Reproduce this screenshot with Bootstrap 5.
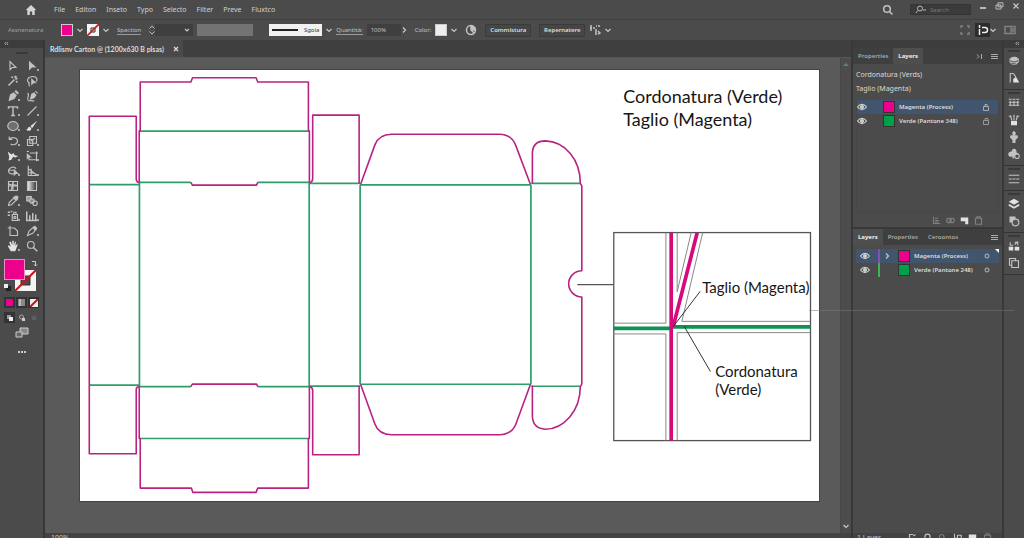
<!DOCTYPE html>
<html lang="it">
<head>
<meta charset="utf-8">
<meta name="viewport" content="width=device-width, initial-scale=1">
<title>Carton</title>
<link href="https://cdn.jsdelivr.net/npm/bootstrap@5.3.0/dist/css/bootstrap.min.css" rel="stylesheet">
<style>
:root{--bar:#4b4b4b;--deep:#3f3f3f;--line:#383838;--txt:#c4c4c4;--ic:#c2c2c2;--mag:#ec008c;--grn:#00a04a}
body{font-family:"Noto Sans","Open Sans",sans-serif;font-size:7px;line-height:10px;color:var(--txt);background:#4b4b4b}
button,input,select{font:inherit;color:inherit;border:0;padding:0;background:none}
a{color:inherit;text-decoration:none}
svg{display:block;flex:none}
.ico{width:12px;height:12px;fill:none;stroke:var(--ic);stroke-width:1.5}
.ico .f,.f{fill:var(--ic);stroke:none}
.ico .hi{fill:#e2e2e2;stroke:none}
.chev{width:6px;height:6px;fill:none;stroke:#c8c8c8;stroke-width:1.2}
.app{height:100vh}
.menubar{height:20px;background:var(--bar);border-bottom:1px solid #414141}
.menubar nav{font-size:7px;gap:10px;margin-left:17px;color:#d0d0d0}
.home{margin-left:25px}
.search{width:61px;height:11px;background:#3b3b3b;border:1px solid #353535;padding:0 4px}
.search input{width:40px;font-size:6px}
.search input::placeholder{color:#777;opacity:1}
.control{height:20px;background:var(--bar);font-size:6px}
.control .first{width:53px;color:#a2a2a2}
.swatch{width:12px;height:12px;border:1px solid #ccc}
.mag{background:var(--mag)}.grn{background:var(--grn)}.pale{background:#eee}
.under{border-bottom:1px solid #999;line-height:8px}
.field{height:12px;background:var(--deep)}
.amount{width:34px}
.pick{appearance:none;width:38px;background:var(--deep) url("data:image/svg+xml,%3Csvg xmlns='http://www.w3.org/2000/svg' viewBox='0 0 6 6'%3E%3Cpath d='M1 2l2 2 2-2' fill='none' stroke='%23c8c8c8' stroke-width='1.2'/%3E%3C/svg%3E") no-repeat right 3px center/6px}
.profile{width:56px;height:12px;background:#737373}
.brush{width:53px;height:12px;background:#f1f1f1;color:#333}
.brush i{width:26px;height:2px;background:#222}
.act{height:13px;border:1px solid #3a3a3a;background:#464646;color:#dedede;font-weight:600;width:46px;border-radius:1px}
.snap{width:15px;height:14px;background:#2c2c2c;place-items:center}
.tools{width:45px;background:var(--bar);border-right:2px solid var(--line)}
.strip{height:8px;background:#3c3c3c}
.grip{width:12px;height:2px;background:#393939}
.toolgrid{display:grid;grid-template-columns:19px 19px;grid-auto-rows:15px;padding:0 3px}
.toolgrid button{display:grid;place-items:center;position:relative}
.more::after{content:"";position:absolute;right:2px;bottom:2px;border:1px solid #aaa}
.pair{width:34px;height:34px;position:relative;margin:6px 0 0 4px}
.pair>*{position:absolute}
.pair .fillc{left:0;top:0;width:21px;height:21px;border:1px solid #ee8cc8}
.pair .nofill{left:11px;top:11px}
.pair .swap{left:27px;top:1px}
.pair .reset{left:0;top:25px}
.mini{gap:1px;padding-left:4px}
.mini button{width:11px;height:11px;background:#333;display:grid;place-items:center}
.mini .plain{background:none}
.mini i{width:7px;height:7px}
.doc-tabs{height:18px;background:var(--deep);border-bottom:1px solid #555}
.doc-tab{background:#4a4a4a;width:138px;font-family:Lato,sans-serif;font-weight:700;color:#dcdcdc;padding:0 4px 0 5px}
.canvas{background:#5a5a5a;padding:12px 21px 0 35px}
.artboard{background:#fff;outline:1px solid #444}
.artboard svg{width:100%;height:auto}
.note{font-family:Lato,"Noto Sans",sans-serif;fill:#161616}
.vscroll{width:11px;background:#4c4c4c;border-left:1px solid #474747}
.status{height:5px;background:#434343;padding-left:6px}
.panels{width:153px;background:var(--line);border-left:2px solid var(--line);border-right:2px solid var(--line)}
.ptabs{height:16px;background:#3f3f3f}
.ptabs button{padding:0 5px;color:#a8a8a8;font-weight:600;font-size:6px}
.ptabs .on{background:#4e4e4e;color:#eee;font-weight:700}
.pbody{background:#4b4b4b;padding:0 3px}
.upper{height:163px;margin-bottom:2px}
.names{line-height:14px;color:#dadada;padding-top:4px}
.rows{border:1px solid #474747;border-top:0}
.lrow{height:14px;font-size:6px;font-weight:600;color:#dedede;padding-right:9px;white-space:nowrap}
.lrow.sel{background:#41566e}
.lrow .swatch{border-color:#333}
.eye{width:10px;height:8px;fill:none;stroke:#ccc;stroke-width:1.2}
.stripe{width:2px;height:14px}
.violet{background:#8050b8}.lime{background:#3fb552}
.pfoot{height:14px;gap:5px}
.pfoot .ico,.botfoot .ico{width:9px;height:9px}
.dim{opacity:.45}
.botfoot{height:5px;background:#434343;gap:6px;padding:0 10px 0 4px}
.dock{width:20px;background:#3f3f3f}
.group{background:#4c4c4c;padding:2px 0 3px;border-bottom:1px solid #333}
.group button{height:17px;width:20px;display:grid;place-items:center}
.rest{background:#4b4b4b}
.guide{position:absolute;left:79%;right:1%;top:310px;height:1px;background:#777;opacity:.5}
</style>
</head>
<body class="overflow-hidden">
<svg width="0" height="0" class="position-absolute" aria-hidden="true">
  <symbol id="down" viewBox="0 0 6 6"><path d="m.5 2 2.500 2.500L5.500 2"/></symbol>
  <symbol id="next" viewBox="0 0 6 6"><path d="m2 .5 2.500 2.500L2 5.500"/></symbol>
  <symbol id="eye" viewBox="0 0 10 8"><path d="M.5 4C3 .5 7 .5 9.500 4 7 7.500 3 7.500.5 4z"/><circle cx="5" cy="4" r="1.500" fill="#ccc"/></symbol>
  <symbol id="burger" viewBox="0 0 7 7"><path d="M0 1.500h7M0 3.500h7M0 5.500h7" stroke="#aaa"/></symbol>
  <symbol id="collapse" viewBox="0 0 5 7"><path d="M2 2 .8 3.500 2 5m2-3L2.800 3.500 4 5" fill="none" stroke="#bbb" stroke-width=".8"/></symbol>
  <symbol id="bin" viewBox="0 0 12 12"><path d="M2 3h8v8H2zM4 3V1h4v2"/></symbol>
</svg>
<div class="app d-flex flex-column position-relative overflow-hidden">
<header class="menubar d-flex align-items-center flex-shrink-0">
  <a href="#" class="home" aria-label="Home"><svg width="12" height="12" viewBox="0 0 12 12"><path d="M6 1 .8 6h1.5v5h2.5V7.600h2.400V11h2.500V6h1.500z" fill="#d5d5d5"/></svg></a>
  <nav class="d-flex"><a href="#">File</a><a href="#">Editon</a><a href="#">Inseto</a><a href="#">Typo</a><a href="#">Selecto</a><a href="#">Filter</a><a href="#">Preve</a><a href="#">Fluxtco</a></nav>
  <div class="ms-auto d-flex align-items-center">
    <button aria-label="Cerca" class="me-3"><svg class="ico" viewBox="0 0 12 12"><circle cx="5" cy="5" r="3.300"/><path d="m7.500 7.500 3 3"/></svg></button>
    <label class="search d-flex align-items-center"><svg width="11" height="9" viewBox="0 0 11 9" fill="none" stroke="#bbb"><circle cx="5" cy="3.500" r="2.500"/><path d="M3 5.500.8 8M8 5h3"/></svg><input class="ms-1" type="search" placeholder="Search" aria-label="Search"></label>
    <div class="d-flex gap-2 ms-2 me-1 pb-2">
      <button aria-label="Riduci"><svg width="8" height="8" viewBox="0 0 8 8"><path d="M1 6h6" stroke="#ddd" stroke-width="1.500"/></svg></button>
      <button aria-label="Ripristina"><svg width="9" height="8" viewBox="0 0 9 8" fill="none" stroke="#bbb"><path d="M3 .8h5v4H3zM1 3h5v4H1z"/></svg></button>
      <button aria-label="Chiudi"><svg width="8" height="8" viewBox="0 0 8 8" stroke="#ccc" stroke-width="1.200"><path d="m1.500 1.500 5 5m0-5-5 5"/></svg></button>
    </div>
  </div>
</header>

<div class="control d-flex align-items-center flex-shrink-0">
  <span class="first ps-2">Assnenatura</span>
  <button class="swatch mag ms-2" aria-label="Riempimento"></button>
  <svg class="chev ms-1"><use href="#down"/></svg>
  <button class="ms-1" aria-label="Traccia"><svg width="12" height="12" viewBox="0 0 12 12"><path d="M0 0h12v12H0z" fill="#f4f4f4"/><path d="M4 4h4v4H4z" fill="none" stroke="#333"/><path d="M0 12 12 0" stroke="#d11c24" stroke-width="1.800"/></svg></button>
  <svg class="chev ms-1"><use href="#down"/></svg>
  <label for="w" class="under ms-2">Spaction</label>
  <svg class="ms-2" width="6" height="10" viewBox="0 0 6 10" fill="none" stroke="#bbb"><path d="m.5 3.500 2.500-2.500 2.500 2.500M.5 6.500 3 9l2.500-2.500"/></svg>
  <select id="w" class="field pick"><option></option></select>
  <button class="profile ms-1" aria-label="Profilo"></button>
  <button class="brush d-flex align-items-center justify-content-around ms-3"><i></i>Sgoia</button>
  <svg class="chev ms-1"><use href="#down"/></svg>
  <label for="q" class="under ms-1">Quantità:</label>
  <input id="q" class="field amount ms-1 ps-1" value="100%">
  <svg class="chev"><use href="#next"/></svg>
  <span class="ms-2">Color:</span>
  <button class="swatch pale ms-1" aria-label="Colore"></button>
  <svg class="chev ms-1"><use href="#down"/></svg>
  <button class="ms-2" aria-label="Ricolora"><svg class="ico" viewBox="0 0 12 12"><circle cx="6" cy="6" r="4.500"/><path class="f" d="M6 6V1.500A4.500 4.500 0 0 1 10.500 6z"/><path d="M6 1.500V6l3 3M6 6h4.500"/></svg></button>
  <button class="act ms-2">Commistura</button>
  <button class="act ms-2">Repernatere</button>
  <button class="ms-1" aria-label="Allinea"><svg class="ico" viewBox="0 0 12 12"><path d="M2 1v6M4 4h2M7 2h1M10 1v2M7 5v6M9 7l2 2-2 1M1 4h2"/></svg></button>
  <svg class="chev ms-1"><use href="#down"/></svg>
  <div class="ms-auto d-flex align-items-center pe-2">
    <svg class="ico dim me-1" viewBox="0 0 12 12"><path d="M2 4V2h2M8 2h2v2M10 8v2H8M4 10H2V8"/></svg>
    <button class="snap d-grid" aria-label="Snap"><svg class="ico" viewBox="0 0 12 12"><path d="M2.500 1v3M2.500 5v6M5 3.500h3a2 2 0 0 1 0 5H5" stroke="#eee"/></svg></button>
    <svg class="chev me-2"><use href="#down"/></svg>
    <svg class="ico dim" viewBox="0 0 12 12"><path d="M1 2.500h10v7H1zM7 2v8M8 5h2M8 7h2"/></svg>
  </div>
</div>

<main class="d-flex flex-grow-1" style="min-height:0">
  <aside class="tools flex-shrink-0">
    <div class="strip ps-1"><svg width="5" height="7"><use href="#collapse"/></svg></div>
    <div class="grip mx-auto mt-1 mb-1"></div>
    <div class="toolgrid">
      <button aria-label="Selezione"><svg class="ico" viewBox="0 0 16 16"><path d="M4 2v11l3-3h5z"/></svg></button>
      <button class="more" aria-label="Selezione diretta"><svg class="ico" viewBox="0 0 16 16"><path class="f" d="M4 1v13l4-4h6z"/></svg></button>
      <button aria-label="Bacchetta"><svg class="ico" viewBox="0 0 16 16"><path d="m2 14 8-8M11 1v3M14 5h-3M6 2l2 2M14 10l-2-2M13 2l-1 1" stroke-width="2"/></svg></button>
      <button aria-label="Lazo"><svg class="ico" viewBox="0 0 16 16"><path d="M5 11C-1 8 3 2 9 2c6 0 7 5 4 7M5 10c-2 1-1 4 0 5"/><path class="f" d="M7 4v10l3-3h4z"/></svg></button>
      <button class="more" aria-label="Penna"><svg class="ico" viewBox="0 0 16 16"><path class="f" d="m2 15 2-9 5-3 4 4-3 5zM10 2l2-2 4 4-2 2z"/></svg></button>
      <button aria-label="Curvatura"><svg class="ico" viewBox="0 0 16 16"><path class="f" d="m5 13 2-8 4-2 3 4-3 4zM12 2l1-1 3 3-1 1z"/><path d="M2 4c4 2-2 8 1 10 2 1 5-1 8 1"/></svg></button>
      <button class="more" aria-label="Testo"><svg class="ico" viewBox="0 0 16 16"><path d="M2 5V2.500h12V5M8 2.500V14M5.500 14h5" stroke-width="1.900"/></svg></button>
      <button class="more" aria-label="Linea"><svg class="ico" viewBox="0 0 16 16"><path d="M2 14 14 2"/></svg></button>
      <button class="more" aria-label="Ellisse"><svg class="ico" viewBox="0 0 16 16"><ellipse cx="8" cy="8" rx="7" ry="6" fill="#6f6f6f"/></svg></button>
      <button class="more" aria-label="Pennello"><svg class="ico" viewBox="0 0 16 16"><path class="hi" d="m15 1-9 7 2 3zM5 9c-3 0-2 4-5 4 3 3 8 1 7-2z"/></svg></button>
      <button class="more" aria-label="Ruota"><svg class="ico" viewBox="0 0 16 16"><path d="M3 6c3-4 11-3 11 2s-7 6-9 4M3 2v4h4"/></svg></button>
      <button class="more" aria-label="Scala"><svg class="ico" viewBox="0 0 16 16"><path d="M5 2h9v9H5zM2 6h7v8H2zM7 8l5-4"/></svg></button>
      <button class="more" aria-label="Altera"><svg class="ico" viewBox="0 0 16 16"><path class="hi" d="m1 2 5 4 3-2 1 3 5 1-4 2-3-1-2 4-4 1 1-5z"/></svg></button>
      <button class="more" aria-label="Trasforma"><svg class="ico" viewBox="0 0 16 16"><path d="M5 4h9v9H4v-3M1 2h3M14 2v2h2M14 15v-2h2"/><path class="f" d="M1 4v9l3-3h4z"/></svg></button>
      <button class="more" aria-label="Forme"><svg class="ico" viewBox="0 0 16 16"><path d="M10 11c-3 2-9 0-8-4s8-6 10-2M3 7h8"/><path class="f" d="M9 5v10l3-3h4z"/></svg></button>
      <button class="more" aria-label="Prospettiva"><svg class="ico" viewBox="0 0 16 16"><path d="M3 1v13h12L3 5M7 5v9M3 10l8 1"/></svg></button>
      <button aria-label="Trama"><svg class="ico" viewBox="0 0 16 16"><path d="M2 2h12v12H2zM2 8h12M8 2v12M2 5c5 4 7-1 12 3M5 14c4-5-1-7 4-12"/></svg></button>
      <button aria-label="Sfumatura"><svg class="ico" viewBox="0 0 16 16"><defs><linearGradient id="g"><stop stop-color="#eee"/><stop offset="1" stop-color="#333"/></linearGradient></defs><path d="M2 2h12v12H2z" fill="url(#g)"/></svg></button>
      <button class="more" aria-label="Contagocce"><svg class="ico" viewBox="0 0 16 16"><path d="m2 14 1-4 6-6 3 3-6 6z"/><path class="f" d="m8 3 3-2 4 0v4l-2 3z"/></svg></button>
      <button aria-label="Fusione"><svg class="ico" viewBox="0 0 16 16"><rect x="1" y="2" width="6" height="6" fill="#999"/><circle cx="8" cy="8" r="3" fill="#888"/><circle cx="12" cy="11" r="3"/></svg></button>
      <button class="more" aria-label="Simboli"><svg class="ico" viewBox="0 0 16 16"><path class="f" d="M1 2h3v2H1zM5 1h2v2H5zM1 6h3v2H1z"/><path d="M7 6h7v8H7zM9 6V3h3v3"/><circle cx="10.500" cy="10" r="1.500"/></svg></button>
      <button class="more" aria-label="Grafico"><svg class="ico" viewBox="0 0 16 16"><path d="M1 2v12h14M5 7v7M9 4v10M13 6v8" stroke-width="2"/></svg></button>
      <button aria-label="Tavola"><svg class="ico" viewBox="0 0 16 16"><path d="M4 1v13h10V8l-4-4H1"/></svg></button>
      <button class="more" aria-label="Sezione"><svg class="ico" viewBox="0 0 16 16"><path d="m2 14 2-6 7-6 3 3-5 6z"/><path class="f" d="m9 4 3-3 3 3-3 4z"/></svg></button>
      <button class="more" aria-label="Mano"><svg class="ico" viewBox="0 0 16 16"><path class="hi" d="M5 15 1 8l1-1 3 2-2-6 2-1 2 5V1h2v6l2-5 1 1-1 5 3-3v2l-3 8z"/></svg></button>
      <button aria-label="Zoom"><svg class="ico" viewBox="0 0 16 16"><circle cx="6.500" cy="6.500" r="4.500"/><path d="m10 10 5 5" stroke-width="2"/></svg></button>
    </div>
    <div class="pair">
      <svg class="nofill" width="21" height="21" viewBox="0 0 21 21"><path d="M0 0h21v21H0z" fill="#f4f4f4"/><path d="M6 6h9v9H6z" fill="#4b4b4b" stroke="#333"/><path d="M0 21 21 0" stroke="#c4161c" stroke-width="2"/></svg>
      <button class="mag fillc" aria-label="Colore riempimento"></button>
      <svg class="swap" width="7" height="7" viewBox="0 0 7 7" fill="none" stroke="#ccc"><path d="M1 1.500h3.500V6M3 4.500 4.500 6 6 4.500"/></svg>
      <svg class="reset" width="7" height="7" viewBox="0 0 7 7"><path d="M2 2h5v5H2z" fill="#222"/><path d="M0 0h4v4H0z" fill="#eee"/></svg>
    </div>
    <div class="mini d-flex mt-1">
      <button aria-label="Colore"><i class="mag"></i></button>
      <button aria-label="Gradiente"><svg width="7" height="7" viewBox="0 0 7 7"><path d="M0 0h7v7H0z" fill="#888"/><path d="M1 0h2v7H1z" fill="#bbb"/></svg></button>
      <button aria-label="Nessuno"><svg width="8" height="8" viewBox="0 0 8 8"><path d="M0 0h8v8H0z" fill="#eee"/><path d="M0 8 8 0" stroke="#c4161c" stroke-width="2"/></svg></button>
    </div>
    <div class="mini d-flex mt-1">
      <button aria-label="Normale"><svg width="8" height="8" viewBox="0 0 8 8"><path d="M1 1h4v4H1z" fill="#999"/><path d="M3 3h4v4H3z" fill="#eee"/></svg></button>
      <button aria-label="Dietro" class="plain"><svg width="8" height="8" viewBox="0 0 8 8"><circle cx="3.500" cy="3" r="2" fill="none" stroke="#aaa"/><path d="M4 4h3v3H4z" fill="#ccc"/></svg></button>
      <button aria-label="Dentro" class="plain dim"><svg width="8" height="8" viewBox="0 0 8 8"><circle cx="4" cy="4" r="2.500" fill="#777"/></svg></button>
    </div>
    <button class="d-block mx-auto mt-1" aria-label="Schermo"><svg width="14" height="11" viewBox="0 0 14 11"><path d="M5 1h8v6H5z" fill="#888" stroke="#ccc"/><path d="M1 5h6v5H1z" fill="#666" stroke="#ccc"/></svg></button>
    <button class="d-block mx-auto mt-2" aria-label="Altro"><svg width="10" height="8" viewBox="0 0 10 8" fill="#ccc"><path d="M1 5h2v2H1zM4 5h2v2H4zM7 5h2v2H7z"/></svg></button>
  </aside>

  <section class="d-flex flex-column flex-grow-1" style="min-width:0">
    <div class="doc-tabs d-flex flex-shrink-0"><div class="doc-tab d-flex align-items-center justify-content-between text-nowrap"><span>Rdlisnv Carton @ (1200x630 B plsas)</span><button aria-label="Chiudi scheda"><svg width="6" height="6" viewBox="0 0 6 6" stroke="#ddd" stroke-width="1.200"><path d="m1 1 4 4m0-4L1 5"/></svg></button></div></div>
    <div class="d-flex flex-grow-1" style="min-height:0">
      <div class="canvas flex-grow-1 overflow-hidden"><div class="artboard">
        <svg viewBox="79 70 740 432" fill="none" role="img" aria-label="Fustella">
          <g stroke="#2e9e6b" stroke-width="1.700">
            <path d="M139 131.300H308M88 184.700H138.500M138 182.500H190M257 182.500H308.500M308.500 183.500H359M359.500 185H530.500M531 183.500H580.500"/>
            <path d="M88 385.500H138.500M138 387H190M257 387H308.500M308.500 386.500H359M359.500 384.700H530.500M531 386.700H580.500M139 439H308"/>
            <path d="M138.500 183V387M308.500 183V387M359.500 185V385M530.500 185V385"/>
          </g>
          <g stroke="#b82383" stroke-width="1.600" stroke-linejoin="round">
            <path d="M138.300 183V131H139.300V82H190L191.700 77.800H255.300L257 82H307.700V131H308.700V183"/>
            <path d="M190 182.500 191.500 185.300H255.800L257 182.500M190 387 191.500 384.600H255.800L257 387"/>
            <path d="M138.300 387V439H139.300V488.700H190.500L192 493H255.300L257 488.700H307.700V439H308.700V387"/>
            <path d="M138 183Q135.300 182 135.300 179V116.300H88.300V454.300H135.300V390Q135.300 387.500 138 387"/>
            <path d="M309 183Q312 182 312 179V115.200H358.500V184M309 387Q312 388 312 391V455.300H358.500V386"/>
            <path d="M360 184.500 374.300 145Q378 134.500 391 134.300H499Q511.500 134.500 515.500 146L530 184.500"/>
            <path d="M360 385 374.300 424.500Q378 435 391 435.300H499Q511.500 435 515.500 424.500L530 385"/>
            <path d="M532 184V153Q532.500 141 545 141C565 141.500 580 160 580 183.500L581.500 186V271A13 13 0 0 0 581.500 297.300V384.500L580 387C580 412 563 429.500 545 429.700Q532.500 429 532 417V386"/>
          </g>
          <g stroke="#555" stroke-width="1.300"><path d="M577 285H613"/><rect x="613.500" y="232.800" width="197" height="208.300"/></g>
          <path d="M613 323.500H665.700V233M677 233V292L691 233M702.500 233 681.700 321.700H810M613 334.300H665.700V441M810 333H677V441" stroke="#888"/>
          <path d="M613.500 328.700H672M672 327.200H810.500" stroke="#0d9254" stroke-width="3.600"/>
          <path d="M671 233V441M697 233 673 327" stroke="#d60a7d" stroke-width="3.700"/>
          <path d="M700 291.700 673 327M684 326.700 710.300 372" stroke="#333"/>
          <g class="note" font-size="18"><text x="623" y="103">Cordonatura (Verde)</text><text x="623" y="126">Taglio (Magenta)</text></g>
          <g class="note" font-size="15"><text x="702" y="293">Taglio (Magenta)</text><text x="715" y="377">Cordonatura</text><text x="715" y="395">(Verde)</text></g>
        </svg></div></div>
      <div class="vscroll d-flex flex-column justify-content-between align-items-center py-1 flex-shrink-0">
        <svg width="6" height="5" viewBox="0 0 6 5"><path d="M0 4 3 1l3 3z" fill="#5c8578"/></svg>
        <svg class="chev"><use href="#down"/></svg>
      </div>
    </div>
    <div class="status overflow-hidden flex-shrink-0">100%</div>
  </section>

  <aside class="panels d-flex flex-column flex-shrink-0">
    <div class="strip flex-shrink-0"></div>
    <div class="ptabs d-flex flex-shrink-0"><button>Properties</button><button class="on">Layers</button>
      <span class="ms-auto d-flex align-items-center gap-2 pe-1"><svg width="7" height="7" viewBox="0 0 7 7" stroke="#aaa" fill="none"><path d="m1 1.500 2 2-2 2M5.500 1v5"/></svg><svg width="7" height="7"><use href="#burger"/></svg></span></div>
    <div class="pbody upper d-flex flex-column flex-shrink-0">
      <div class="names"><div>Cordonatura (Verds)</div><div>Taglio (Magenta)</div></div>
      <div class="rows flex-grow-1 mt-1">
        <div class="lrow sel d-flex align-items-center"><svg class="eye"><use href="#eye"/></svg><span class="swatch mag ms-3"></span><span class="ms-1">Magenta (Process)</span><svg class="ms-auto" width="6" height="7" viewBox="0 0 6 7" fill="none" stroke="#aaa"><path d="M.5 2.500h5v4h-5zM2 2.500v-2h2v2"/></svg></div>
        <div class="lrow d-flex align-items-center"><svg class="eye"><use href="#eye"/></svg><span class="swatch grn ms-3"></span><span class="ms-1">Verde (Pantone 348)</span><svg class="ms-auto" width="6" height="7" viewBox="0 0 6 7" fill="none" stroke="#999"><path d="M.5 2.500h5v4h-5zM2 2.500v-2h3v2"/></svg></div>
      </div>
      <div class="pfoot d-flex align-items-center justify-content-end pe-3">
        <svg class="ico dim" viewBox="0 0 12 12"><path d="M2 1v9h9M4 3h4M4 6h5M4 8h5"/></svg><svg class="ico dim" viewBox="0 0 12 12"><circle cx="4" cy="6" r="3"/><circle cx="8" cy="6" r="3"/></svg><svg class="ico" viewBox="0 0 12 12"><path class="hi" d="M1 2h10v9H7V7H1z"/></svg><svg class="ico dim"><use href="#bin"/></svg>
      </div>
    </div>
    <div class="ptabs d-flex flex-shrink-0"><button class="on">Layers</button><button>Properties</button><button>Ceroontos</button><span class="ms-auto d-flex align-items-center pe-1"><svg width="7" height="7"><use href="#burger"/></svg></span></div>
    <div class="pbody flex-grow-1 pt-1">
      <div class="lrow sel d-flex align-items-center position-relative"><svg class="eye ms-1"><use href="#eye"/></svg><i class="stripe violet ms-2"></i><svg class="chev ms-1"><use href="#next"/></svg><span class="swatch mag ms-2"></span><span class="ms-1">Magenta (Process)</span><svg class="ms-auto" width="6" height="6" viewBox="0 0 6 6" fill="none" stroke="#bbb"><circle cx="3" cy="3" r="2"/></svg><svg class="position-absolute end-0 top-0" width="4" height="4" viewBox="0 0 4 4"><path d="M0 0h4v4z" fill="#fff"/></svg></div>
      <div class="lrow d-flex align-items-center"><svg class="eye ms-1"><use href="#eye"/></svg><i class="stripe lime ms-2"></i><svg class="chev ms-1"></svg><span class="swatch grn ms-2"></span><span class="ms-1">Verde (Pantone 248)</span><svg class="ms-auto" width="6" height="6" viewBox="0 0 6 6" fill="none" stroke="#bbb"><circle cx="3" cy="3" r="2"/></svg></div>
    </div>
    <div class="botfoot d-flex overflow-hidden flex-shrink-0"><span class="me-auto">1 Layer</span>
      <svg class="ico" viewBox="0 0 12 12"><path d="M2 11V2h5M7 4l3-2"/></svg><svg class="ico" viewBox="0 0 12 12"><circle cx="6" cy="5" r="3.500"/></svg><svg class="ico dim" viewBox="0 0 12 12"><circle cx="5" cy="5" r="3"/></svg><svg class="ico" viewBox="0 0 12 12"><path d="M2 1v6h3M6 3h5v6H6z"/></svg><svg class="ico" viewBox="0 0 12 12"><path class="hi" d="M1 2h10v9H1z"/></svg><svg class="ico dim"><use href="#bin"/></svg></div>
  </aside>

  <aside class="dock d-flex flex-column flex-shrink-0">
    <div class="strip d-flex justify-content-end pe-1"><svg width="5" height="7"><use href="#collapse"/></svg></div>
    <div class="group"><div class="grip mx-auto"></div>
      <button aria-label="Colore"><svg class="ico" viewBox="0 0 16 16"><path class="f" d="M2 6c1-5 12-5 13 1 0 3-2 3-4 6H7C3 12 1 9 2 6z"/><path d="M2 7c4 3 8 3 12 0M4 11l7 1" stroke="#666"/></svg></button>
      <button aria-label="Guida colore"><svg class="ico" viewBox="0 0 16 16"><path d="M3 14V2h4l3 4v2"/><path class="hi" d="m7 14 0-5 4-2 4 7z"/></svg></button></div>
    <div class="group"><div class="grip mx-auto"></div>
      <button aria-label="Campioni"><svg class="ico" viewBox="0 0 16 16"><path d="M1 3h4M6 3h4M11 3h4M1 7h14M1 11h14M3 5v7M8 5v7M13 5v7"/></svg></button>
      <button aria-label="Pennelli"><svg class="ico" viewBox="0 0 16 16"><path class="hi" d="M4 9h8v6H4z"/><path d="m3 2 2 6M8 1v7M13 2l-2 6M1 3h4M11 3h4"/></svg></button>
      <button aria-label="Simboli"><svg class="ico" viewBox="0 0 16 16"><path class="f" d="M8 0c3 2 3 4 1 6 3-1 5 0 4 3l-3 3v4H6v-4L3 9c-1-3 1-4 4-3C5 4 5 2 8 0z"/></svg></button>
      <button aria-label="Stili"><svg class="ico" viewBox="0 0 16 16"><path class="f" d="M8 1a3.500 3.500 0 0 1 3 5 3.500 3.500 0 1 1-3 5v3H6v-3a3.500 3.500 0 1 1-1-6 3.500 3.500 0 0 1 3-4z"/><circle cx="12" cy="11" r="3" fill="#4c4c4c"/></svg></button></div>
    <div class="group"><div class="grip mx-auto"></div>
      <button aria-label="Traccia"><svg class="ico" viewBox="0 0 16 16"><path d="M1 3h14M1 8h4M6 8h4M11 8h4M1 13h14"/></svg></button></div>
    <div class="group"><div class="grip mx-auto"></div>
      <button aria-label="Livelli"><svg class="ico" viewBox="0 0 16 16"><path class="hi" d="m8 1 7 4-7 4-7-4z"/><path d="m1 9 7 4 7-4" stroke="#ddd" stroke-width="2.500"/></svg></button>
      <button aria-label="Aspetto"><svg class="ico" viewBox="0 0 16 16"><path class="f" d="M2 2h8v8H2z"/><circle cx="10" cy="10" r="4.500" fill="#555"/></svg></button></div>
    <div class="group"><div class="grip mx-auto"></div>
      <button aria-label="Esporta"><svg class="ico" viewBox="0 0 16 16"><path class="hi" d="M1 9h6v5H1zM9 9h6v5H9z"/><path d="M3 3v4h4M9 6l4-4M9 3h4v4"/></svg></button>
      <button aria-label="Tavole"><svg class="ico" viewBox="0 0 16 16"><path d="M2 2h8v3H5v6H2zM5 5h9v9H5z"/></svg></button></div>
    <div class="rest flex-grow-1"></div>
  </aside>
</main>
<div class="guide"></div>
</div>
<script src="https://cdn.jsdelivr.net/npm/bootstrap@5.3.0/dist/js/bootstrap.bundle.min.js"></script>
</body>
</html>
